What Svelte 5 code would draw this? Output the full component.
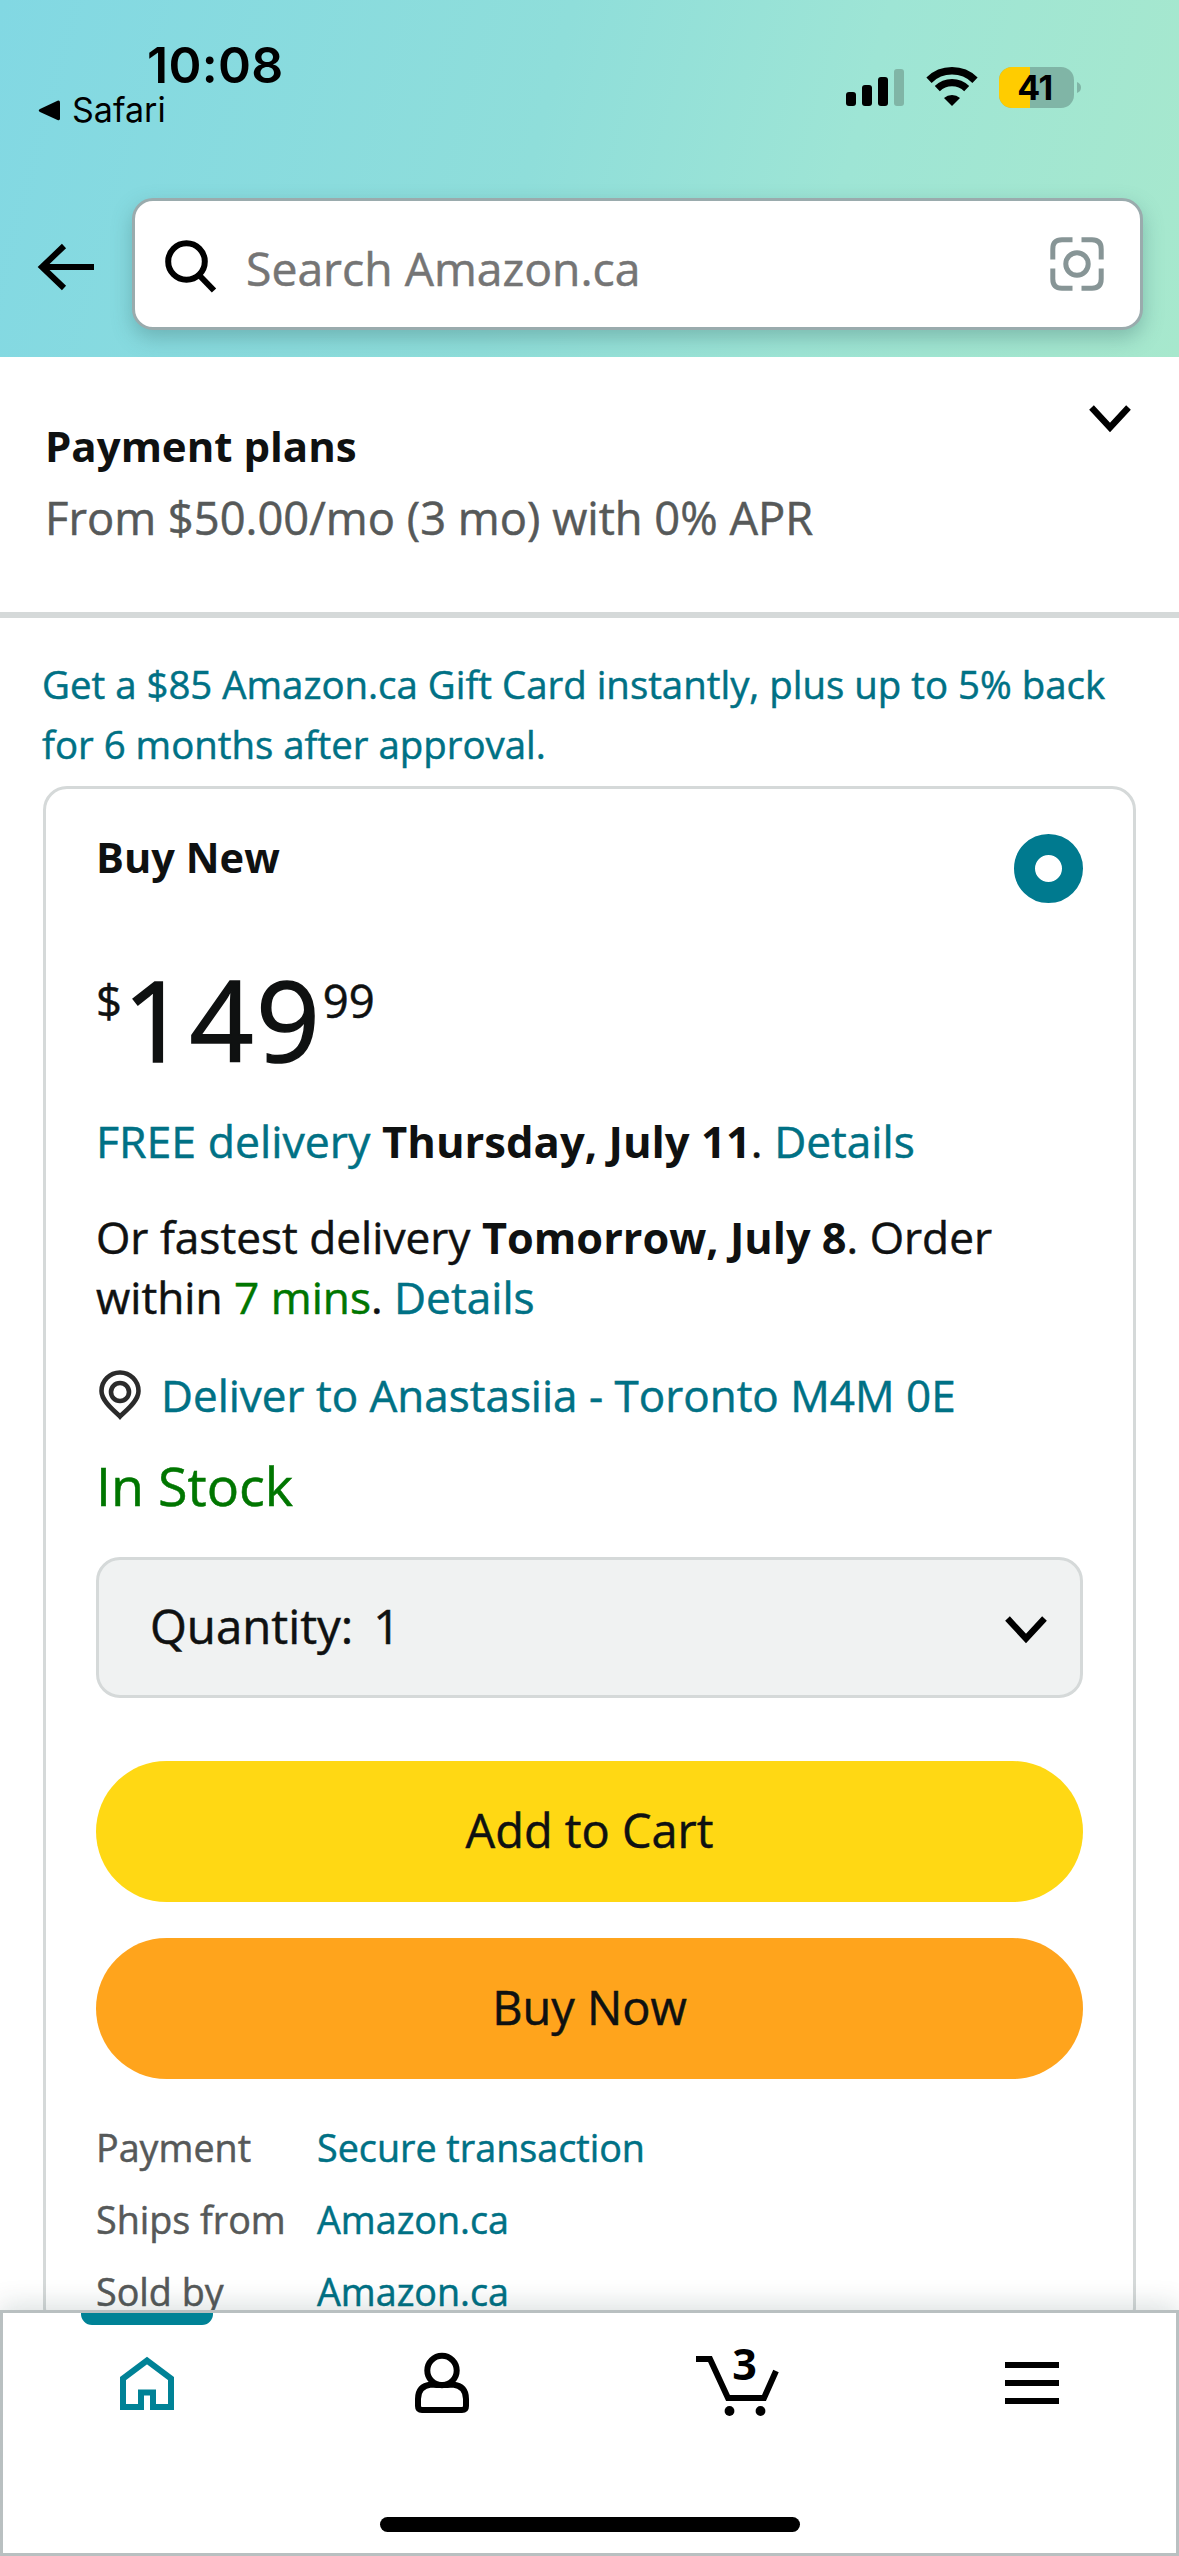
<script>
  const sellerRows = [
    ['Payment', 'Secure transaction'],
    ['Ships from', 'Amazon.ca'],
    ['Sold by', 'Amazon.ca']
  ];
</script>

{#snippet chevron()}
  <svg class="chevron" width="42" height="28" viewBox="0 0 42 28">
    <path d="M2.5 2.5 L21 22.5 L39.5 2.5" fill="none" stroke="#000" stroke-width="6.4" />
  </svg>
{/snippet}

<div class="screen">
  <header>
    <div class="status">
      <div class="clock">
        <div class="time">10:08</div>
        <div class="back-app">
          <svg width="23" height="21" viewBox="0 0 23 21">
            <path d="M2 9 L19.500 .8 Q22 0 22 2.500 V18.500 Q22 21 19.500 20 L2 12 Q-.5 10.500 2 9Z" />
          </svg>
          <span>Safari</span>
        </div>
      </div>
      <svg class="indicators" width="236" height="42" viewBox="0 0 236 42">
        <rect x="0" y="25" width="10" height="14" rx="3" />
        <rect x="16" y="18" width="10" height="21" rx="3" />
        <rect x="32" y="10" width="10" height="29" rx="3" />
        <rect x="48" y="2" width="10" height="37" rx="3" fill="#80b5a6" />
        <g fill="none" stroke="#000">
          <path d="M83 13.200 A33 33 0 0 1 129 13.200" stroke-width="7.500" />
          <path d="M91.300 21.600 A21 21 0 0 1 120.700 21.600" stroke-width="7.200" />
        </g>
        <path d="M98 31 A12 12 0 0 1 114 31 L106 39Z" />
        <clipPath id="cell"><rect x="153" y="0" width="75" height="41" rx="13" /></clipPath>
        <g clip-path="url(#cell)">
          <rect x="153" y="0" width="75" height="41" fill="#80b5a6" />
          <rect x="153" y="0" width="31" height="41" fill="#fc0" />
        </g>
        <path d="M231 15 Q235 16.500 235 20.500 Q235 24.500 231 26Z" fill="#80b5a6" />
        <text class="charge" x="189" y="33" text-anchor="middle">41</text>
      </svg>
    </div>
    <div class="search-row">
      <svg class="back" width="58" height="48" viewBox="0 0 58 48">
        <path d="M57 24 H5 M27 3 L5 24 L27 45" fill="none" stroke="#000" stroke-width="6" />
      </svg>
      <div class="search">
        <svg class="lens" width="54" height="54" viewBox="0 0 54 54">
          <circle cx="22.500" cy="22.500" r="18.300" fill="none" stroke="#000" stroke-width="6" />
          <path d="M35 36 L50 51.500" stroke="#000" stroke-width="6" />
        </svg>
        <span class="placeholder">Search Amazon.ca</span>
        <svg width="54" height="54" viewBox="0 0 54 54" fill="none" stroke="#879596" stroke-width="5">
          <path d="M22.500 2.800 H12 Q2.800 2.800 2.800 12 V22.500 M31.500 2.800 H42 Q51.200 2.800 51.200 12 V22.500 M22.500 51.200 H12 Q2.800 51.200 2.800 42 V31.500 M31.500 51.200 H42 Q51.200 51.200 51.200 42 V31.500" />
          <circle cx="27" cy="27" r="11.200" />
        </svg>
      </div>
    </div>
  </header>

  <main>
    <section class="plans">
      <div>
        <h2>Payment plans</h2>
        <p>From $50.00/mo (3 mo) with 0% APR</p>
      </div>
      {@render chevron()}
    </section>

    <a class="promo">Get a $85 Amazon.ca Gift Card instantly, plus up to 5% back<br />for 6 months after approval.</a>

    <section class="card">
      <div class="card-head">
        <h2>Buy New</h2>
        <span class="radio"></span>
      </div>
      <div class="price">
        <span class="small currency">$</span><span class="whole">149</span><span class="small">99</span>
      </div>
      <p class="free"><a>FREE delivery</a> <b>Thursday, July 11</b>. <a>Details</a></p>
      <p class="fast">Or fastest delivery <b>Tomorrow, July 8</b>. Order<br />within <span class="green">7 mins</span>. <a>Details</a></p>
      <div class="address">
        <svg width="42" height="48" viewBox="0 0 42 48" fill="none" stroke="#2b2b2b" stroke-width="4.600">
          <path d="M21 45.500 C17 41 2.500 31 2.500 20 A18.500 18.500 0 0 1 39.500 20 C39.500 31 25 41 21 45.500Z" />
          <circle cx="21" cy="21" r="9" />
        </svg>
        <a>Deliver to Anastasiia - Toronto M4M 0E</a>
      </div>
      <div class="stock">In Stock</div>
      <div class="quantity">
        <span>Quantity:</span><span class="count">1</span>
        {@render chevron()}
      </div>
      <button class="add">Add to Cart</button>
      <button class="buy">Buy Now</button>
      <dl>
        {#each sellerRows as [label, value]}
          <dt>{label}</dt>
          <dd>{value}</dd>
        {/each}
      </dl>
    </section>
  </main>

  <nav>
    <div class="tabs">
      <div class="tab active">
        <svg width="90" height="72" viewBox="0 0 90 72">
          <path d="M21 59 V30.500 L45 12.500 L69 30.500 V59 H51 V44.500 H39 V59Z" fill="none" stroke="#008296" stroke-width="6" />
        </svg>
      </div>
      <div class="tab">
        <svg width="90" height="72" viewBox="0 0 90 72" fill="none" stroke="#000" stroke-width="6">
          <ellipse cx="45" cy="22.500" rx="14.700" ry="14.700" />
          <path d="M34 36.500 Q21 38 21 51 V58 Q21 62 25 62 H65 Q69 62 69 58 V51 Q69 38 56 36.500 Q45 37.500 34 36.500Z" />
        </svg>
      </div>
      <div class="tab">
        <svg width="90" height="72" viewBox="0 0 90 72">
          <path d="M4 11 H18 L36 50 H72 L84 23" fill="none" stroke="#000" stroke-width="6" />
          <circle cx="37.500" cy="63" r="4.900" />
          <circle cx="68.500" cy="63" r="4.900" />
          <text class="badge" x="52.500" y="32" text-anchor="middle">3</text>
        </svg>
      </div>
      <div class="tab">
        <svg width="90" height="72" viewBox="0 0 90 72">
          <path d="M18 17 H72 M18 35 H72 M18 53 H72" stroke="#000" stroke-width="6" />
        </svg>
      </div>
    </div>
    <div class="home-bar"></div>
  </nav>
</div>

<style>
  :global(body) { margin: 0; background: #fff; }
  svg { display: block; flex: none; overflow: visible; }
  h2, p, dl, dd { margin: 0; }
  a, dd { color: #007185; }

  .screen {
    width: 1179px;
    height: 2556px;
    display: flex;
    flex-direction: column;
    overflow: hidden;
    background: #fff;
    color: #0f1111;
    font-family: "Open Sans", "Noto Sans", sans-serif;
  }

  header {
    height: 357px;
    flex: none;
    overflow: hidden;
    background: linear-gradient(105deg, #82d8e3 0%, #8fdeda 45%, #9ee5d5 70%, #a7e8cd 100%);
  }
  .status {
    height: 198px;
    display: flex;
    justify-content: space-between;
    font-family: Inter, sans-serif;
    color: #000;
  }
  .clock { padding: 40px 0 0 38px; }
  .time { padding-left: 109px; font-size: 50px; font-weight: 600; line-height: 50px; letter-spacing: .3px; }
  .back-app { display: flex; align-items: center; gap: 11px; font-size: 34px; line-height: 40px; }
  .indicators { margin: 67px 97px 0 0; }
  .charge { font-size: 34px; font-weight: 700; letter-spacing: -.5px; }

  .search-row { display: flex; align-items: center; gap: 37px; padding: 0 36px 0 37px; }
  .back { margin-top: 6px; }
  .search {
    flex: 1;
    box-sizing: border-box;
    height: 132px;
    display: flex;
    align-items: center;
    gap: 28px;
    padding: 0 36px 0 29px;
    border: 3px solid #9aabad;
    border-radius: 21px;
    background: #fff;
    box-shadow: 0 8px 20px rgba(60, 110, 110, .36);
  }
  .lens { margin-top: 3px; }
  .placeholder { flex: 1; padding-top: 8px; font-size: 46.300px; color: #757575; -webkit-text-stroke: .5px; }

  main { flex: 1; min-height: 0; overflow: hidden; -webkit-text-stroke: .5px; }
  h2 { font-size: 42px; font-weight: 700; }
  h2, b { -webkit-text-stroke: 0; }

  .plans {
    box-sizing: border-box;
    height: 261px;
    display: flex;
    justify-content: space-between;
    padding: 56px 48px 0 45px;
    border-bottom: 6px solid #d5d9d9;
  }
  .plans h2 { line-height: 65px; }
  .plans p { margin-top: 4px; font-size: 45.300px; line-height: 72px; color: #565959; }
  .plans .chevron { margin-top: -8px; }

  .promo { display: block; margin: 36px 0 12px 42px; font-size: 38.400px; line-height: 60px; white-space: nowrap; }

  .card {
    margin: 0 43px;
    padding: 38px 50px 0;
    border: 3px solid #d5d9d9;
    border-radius: 24px;
  }
  .card-head { display: flex; justify-content: space-between; height: 76px; line-height: 60px; }
  .card-head h2 { font-size: 41.600px; }
  .radio {
    box-sizing: border-box;
    width: 69px;
    height: 69px;
    margin-top: 7px;
    border: 21px solid #007a8f;
    border-radius: 50%;
  }
  .price { display: flex; margin-top: 60px; height: 112px; }
  .small { margin-top: 7px; font-size: 45.500px; line-height: 60px; }
  .currency { width: 27px; }
  .whole { font-size: 112px; line-height: 112px; letter-spacing: 2.500px; -webkit-text-stroke: 1.5px; }
  .free, .fast { margin-top: 36px; font-size: 44.600px; line-height: 60px; white-space: nowrap; }
  .free b, .fast b, .free b + a { line-height: 1px; }
  .free b { font-size: 43.600px; }
  .free b + a { font-size: 44.200px; }
  .fast { font-size: 44.200px; }
  .fast b { font-size: 43.300px; }
  .green, .stock { color: #007600; }
  .address { display: flex; align-items: center; gap: 20px; margin: 38px 0 0 3px; font-size: 44px; line-height: 60px; white-space: nowrap; }
  .stock { margin-top: 24px; font-size: 53.800px; line-height: 72px; }

  .quantity {
    box-sizing: border-box;
    height: 141px;
    display: flex;
    align-items: center;
    margin-top: 36px;
    padding: 0 33px 4px 51px;
    border: 3px solid #d5d9d9;
    border-radius: 24px;
    background: #f0f2f2;
    font-size: 47.400px;
  }
  .count { margin-left: 20px; }
  .quantity .chevron { margin: 8px 0 0 auto; }

  button {
    display: block;
    width: 100%;
    height: 141px;
    padding: 0 0 3px;
    border: 0;
    border-radius: 71px;
    font: 46.900px "Open Sans", sans-serif;
    color: #0f1111;
    -webkit-text-stroke: .5px;
  }
  .add { margin-top: 63px; background: #ffd814; }
  .buy { margin-top: 36px; background: #ffa41c; }

  dl { display: grid; grid-template-columns: 221px 1fr; margin-top: 33px; font-size: 37.700px; line-height: 72px; }
  dt { color: #565959; }

  nav {
    position: relative;
    box-sizing: border-box;
    height: 246px;
    flex: none;
    border: 3px solid #b9c0c1;
    background: #fff;
    box-shadow: 0 -4px 26px rgba(15, 50, 50, .16);
  }
  .tabs { display: grid; grid-template-columns: repeat(4, 1fr); height: 204px; margin: 0 -3px; }
  .tab { display: flex; flex-direction: column; align-items: center; padding-top: 35px; }
  .active { padding-top: 0; }
  .active::before { content: ""; width: 132px; height: 12px; margin-bottom: 23px; border-radius: 0 0 11px 11px; background: #008296; }
  .badge { font-size: 43px; font-weight: 700; }
  .home-bar { width: 420px; height: 15px; margin: 0 auto; border-radius: 8px; background: #000; }
</style>
